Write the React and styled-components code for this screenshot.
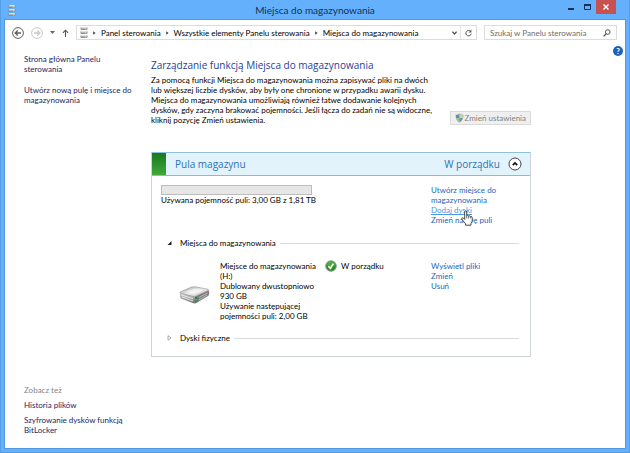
import React, { useState } from "react";
import styled, { createGlobalStyle } from "styled-components";

const App = () => {
  const [poolOpen, setPoolOpen] = useState(true);
  const [spacesOpen, setSpacesOpen] = useState(true);
  const [drivesOpen, setDrivesOpen] = useState(false);

  return (
    <>
      <GlobalStyle />
      <Window>
        <TitleBar>
          <TitleIcon>
            <DrivesIcon />
          </TitleIcon>
          <WindowTitle>Miejsca do magazynowania</WindowTitle>
          <WindowButtons>
            <WindowButton aria-label="Minimalizuj">
              <svg width="6" height="6" viewBox="0 0 6 6">
                <path d="M0 5h6" stroke="#17304f" strokeWidth="2" />
              </svg>
            </WindowButton>
            <WindowButton aria-label="Maksymalizuj">
              <svg width="7" height="6" viewBox="0 0 7 6">
                <path d="M0.5 1v4.5h6V1" fill="none" stroke="#17304f" />
                <path d="M0 1h7" stroke="#17304f" strokeWidth="2" />
              </svg>
            </WindowButton>
            <WindowButton $close aria-label="Zamknij">
              <svg width="6" height="6" viewBox="0 0 6 6">
                <path
                  d="M0.5 0.5l5 5M5.5 0.5l-5 5"
                  stroke="#fff"
                  strokeWidth="1.4"
                />
              </svg>
            </WindowButton>
          </WindowButtons>
        </TitleBar>

        <Client>
          <NavBar>
            <NavButton $width={12} aria-label="Wstecz">
              <ArrowCircle color="#5d5d5d" />
            </NavButton>
            <NavButton $width={12} aria-label="Dalej" disabled>
              <ArrowCircle color="#c9c9c9" flip />
            </NavButton>
            <NavButton $width={5} aria-label="Ostatnie lokalizacje">
              <svg width="5" height="3" viewBox="0 0 5 3">
                <path d="M0 0h5L2.5 3z" fill="#666" />
              </svg>
            </NavButton>
            <NavButton $width={7} aria-label="W górę">
              <svg width="7" height="8" viewBox="0 0 7 8">
                <path
                  d="M3.5 8V1.2M0.9 3.8L3.5 1.2L6.1 3.8"
                  fill="none"
                  stroke="#555"
                  strokeWidth="1.1"
                />
              </svg>
            </NavButton>

            <AddressBar>
              <DrivesIcon />
              <CrumbArrow />
              <Crumb href="#panel">Panel sterowania</Crumb>
              <CrumbArrow />
              <Crumb href="#elementy">Wszystkie elementy Panelu sterowania</Crumb>
              <CrumbArrow />
              <Crumb href="#miejsca">Miejsca do magazynowania</Crumb>
              <AddressTools>
                <NavButton $width={5} aria-label="Poprzednie lokalizacje">
                  <svg width="5" height="4" viewBox="0 0 5 4">
                    <path
                      d="M0.4 0.6L2.5 3L4.6 0.6"
                      fill="none"
                      stroke="#555"
                      strokeWidth="1.3"
                    />
                  </svg>
                </NavButton>
                <RefreshButton aria-label="Odśwież">
                  <svg width="7" height="8" viewBox="0 0 7 8">
                    <path
                      d="M5.4 2.2A2.7 2.7 0 1 0 6.2 4.6"
                      fill="none"
                      stroke="#555"
                      strokeWidth="1"
                    />
                    <path d="M6.4 0.6v2.8H3.6z" fill="#555" />
                  </svg>
                </RefreshButton>
              </AddressTools>
            </AddressBar>

            <SearchBox>
              <SearchInput
                type="text"
                aria-label="Szukaj w Panelu sterowania"
                placeholder="Szukaj w Panelu sterowania"
              />
              <svg width="8" height="8" viewBox="0 0 8 8">
                <circle
                  cx="4.8"
                  cy="3"
                  r="2.3"
                  fill="none"
                  stroke="#555"
                  strokeWidth="1"
                />
                <path d="M3.2 4.7L0.6 7.4" stroke="#555" strokeWidth="1.3" />
              </svg>
            </SearchBox>
          </NavBar>

          <Content>
            <Sidebar>
              <SideLink href="#start">Strona główna Panelu sterowania</SideLink>
              <SideLink href="#nowa-pula">
                Utwórz nową pulę i miejsce do magazynowania
              </SideLink>
              <SeeAlso>
                <SeeAlsoTitle>Zobacz też</SeeAlsoTitle>
                <SideLink href="#historia">Historia plików</SideLink>
                <SideLink href="#bitlocker">
                  Szyfrowanie dysków funkcją BitLocker
                </SideLink>
              </SeeAlso>
            </Sidebar>

            <Main>
              <PageTitle>Zarządzanie funkcją Miejsca do magazynowania</PageTitle>
              <Intro>
                <IntroText>
                  Za pomocą funkcji Miejsca do magazynowania można zapisywać
                  pliki na dwóch lub większej liczbie dysków, aby były one
                  chronione w przypadku awarii dysku. Miejsca do magazynowania
                  umożliwiają również łatwe dodawanie kolejnych dysków, gdy
                  zaczyna brakować pojemności. Jeśli łącza do zadań nie są
                  widoczne, kliknij pozycję Zmień ustawienia.
                </IntroText>
                <SettingsButton disabled>
                  <ShieldIcon />
                  Zmień ustawienia
                </SettingsButton>
              </Intro>

              <Pool>
                <PoolHeader>
                  <PoolStatusMark />
                  <PoolName>Pula magazynu</PoolName>
                  <PoolState>W porządku</PoolState>
                  <PoolToggle
                    aria-label="Zwiń pulę"
                    aria-expanded={poolOpen}
                    onClick={() => setPoolOpen(!poolOpen)}
                  >
                    <svg width="14" height="14" viewBox="0 0 14 14">
                      <circle
                        cx="7"
                        cy="7"
                        r="6"
                        fill="#fff"
                        stroke="#444"
                        strokeWidth="1"
                      />
                      <path
                        d={poolOpen ? "M4.8 8.2L7 6L9.2 8.2" : "M4.8 6L7 8.2L9.2 6"}
                        fill="none"
                        stroke="#111"
                        strokeWidth="1.7"
                      />
                    </svg>
                  </PoolToggle>
                </PoolHeader>

                {poolOpen && (
                  <PoolBody>
                    <PoolRow>
                      <div>
                        <UsageBar
                          role="progressbar"
                          aria-label="Używana pojemność puli"
                          aria-valuemin={0}
                          aria-valuemax={1853}
                          aria-valuenow={3}
                        />
                        <p>Używana pojemność puli: 3,00 GB z 1,81 TB</p>
                      </div>
                      <Actions>
                        <ActionLink href="#utworz">
                          Utwórz miejsce do magazynowania
                        </ActionLink>
                        <ActionLink href="#dodaj" $active>
                          Dodaj dyski
                          <HandPointer />
                        </ActionLink>
                        <ActionLink href="#nazwa">Zmień nazwę puli</ActionLink>
                      </Actions>
                    </PoolRow>

                    <SectionToggle
                      aria-expanded={spacesOpen}
                      onClick={() => setSpacesOpen(!spacesOpen)}
                    >
                      <Triangle open={spacesOpen} />
                      Miejsca do magazynowania
                    </SectionToggle>
                    {spacesOpen && (
                      <SpaceRow>
                        <DriveCell>
                          <DriveIcon />
                        </DriveCell>
                        <div>
                          <p>Miejsce do magazynowania (H:)</p>
                          <p>Dublowany dwustopniowo</p>
                          <p>930 GB</p>
                          <p>Używanie następującej pojemności puli: 2,00 GB</p>
                        </div>
                        <SpaceState>
                          <OkIcon />
                          W porządku
                        </SpaceState>
                        <Actions>
                          <ActionLink href="#pliki">Wyświetl pliki</ActionLink>
                          <ActionLink href="#zmien">Zmień</ActionLink>
                          <ActionLink href="#usun">Usuń</ActionLink>
                        </Actions>
                      </SpaceRow>
                    )}

                    <SectionToggle
                      aria-expanded={drivesOpen}
                      onClick={() => setDrivesOpen(!drivesOpen)}
                    >
                      <Triangle open={drivesOpen} />
                      Dyski fizyczne
                    </SectionToggle>
                  </PoolBody>
                )}
              </Pool>
            </Main>

            <HelpButton aria-label="Pomoc">?</HelpButton>
          </Content>
        </Client>
      </Window>
    </>
  );
};

export default App;

// Icons
const DrivesIcon = () => (
  <svg width="8" height="11" viewBox="0 0 8 11">
    {[0, 4, 8].map((y) => (
      <g key={y}>
        <rect x="0.5" y={y} width="7" height="3" rx="1" fill="#8c8c8c" />
        <rect x="1" y={y} width="6" height="1.4" rx="0.7" fill="#e2e2e2" />
        <rect x="5" y={y + 1.6} width="1.4" height="0.8" fill="#d8efc8" />
      </g>
    ))}
  </svg>
);

const ArrowCircle = ({ color, flip }) => (
  <svg width="12" height="12" viewBox="0 0 12 12">
    <circle cx="6" cy="6" r="5.4" fill="none" stroke={color} strokeWidth="1" />
    <path
      d={flip ? "M3 6h5.6M6.3 3.5L8.8 6L6.3 8.5" : "M9 6H3.4M5.7 3.5L3.2 6L5.7 8.5"}
      fill="none"
      stroke={color}
      strokeWidth="1.3"
    />
  </svg>
);

const CrumbArrow = () => (
  <svg width="3" height="4" viewBox="0 0 3 4">
    <path d="M0.2 0.2L2.6 2L0.2 3.8z" fill="#444" />
  </svg>
);

const ShieldIcon = () => (
  <svg width="9" height="10" viewBox="0 0 9 10">
    <path
      d="M4.5 0.3C5.8 1.2 7.2 1.5 8.6 1.5C8.8 5.4 7.4 8.4 4.5 9.8C1.6 8.4 0.2 5.4 0.4 1.5C1.8 1.5 3.2 1.2 4.5 0.3z"
      fill="#b5bcc0"
    />
    <path d="M4.5 1.2V5H1.2C1 4 1 3.2 1 2.2C2.3 2.2 3.4 1.9 4.5 1.2z" fill="#5f8fa8" />
    <path d="M4.5 1.2V5h3.3C8 4 8 3.2 8 2.2C6.7 2.2 5.6 1.9 4.5 1.2z" fill="#c3d49c" />
    <path d="M4.5 5V9C2.8 8.1 1.7 6.8 1.2 5z" fill="#a3c08a" />
    <path d="M4.5 5V9C6.2 8.1 7.3 6.8 7.8 5z" fill="#6c97ad" />
  </svg>
);

const Triangle = ({ open }) => (
  <svg width="5" height="6" viewBox="0 0 5 6">
    {open ? (
      <path d="M4.5 1v4H0.5z" fill="#222" />
    ) : (
      <path d="M1 0.7L4 3L1 5.3z" fill="#fff" stroke="#999" strokeWidth="0.8" />
    )}
  </svg>
);

const DriveIcon = () => (
  <svg width="31" height="18" viewBox="0 0 32 18">
    <defs>
      <linearGradient id="driveTop" x1="0" y1="0" x2="1" y2="1">
        <stop offset="0" stopColor="#a4a4a4" />
        <stop offset="0.5" stopColor="#ececec" />
        <stop offset="1" stopColor="#bcbcbc" />
      </linearGradient>
      <linearGradient id="driveFront" x1="0" y1="0" x2="0" y2="1">
        <stop offset="0" stopColor="#dedede" />
        <stop offset="1" stopColor="#6c6c6c" />
      </linearGradient>
    </defs>
    <path d="M1 6L17 10V17.5H15L2 12.6Q0.5 11.5 1 6z" fill="url(#driveFront)" />
    <path d="M17 10L31 4Q31.6 8.5 30 10L17.5 17.5H15.5z" fill="#7c7c7c" />
    <path
      d="M1 6L13 0.8Q15 0.3 17 0.6L30 3Q31 3.5 30 4.3L18 10Q16 10.8 14.5 10.5L1.5 7Q0.5 6.5 1 6z"
      fill="url(#driveTop)"
      stroke="#8e8e8e"
      strokeWidth="0.6"
    />
    <path d="M7 6L15 2.5L25 4L16 8.5z" fill="#fff" opacity="0.5" />
    <path d="M2.5 9L14.5 12.8M3 11L14.5 15.2" stroke="#f4f4f4" strokeWidth="0.9" />
    <path d="M20.5 11.5L29.5 7M20.5 14L29 9.2" stroke="#c9c9c9" strokeWidth="0.8" />
    <rect x="16.5" y="11" width="2.2" height="5" fill="#23813a" />
    <rect x="17" y="13" width="1.2" height="1.6" fill="#6fe07c" />
  </svg>
);

const OkIcon = () => (
  <svg width="12" height="12" viewBox="0 0 12 12">
    <circle cx="6" cy="6" r="5.3" fill="#2a8f27" stroke="#8a978a" strokeWidth="0.9" />
    <path d="M1.5 5.5a4.5 4.5 0 0 1 9 0Q6 7 1.5 5.5z" fill="#6cc45c" opacity="0.5" />
    <path d="M3.4 6.2L5.4 8.4L8.4 3.6" fill="none" stroke="#fff" strokeWidth="1.6" />
  </svg>
);

const HandPointer = () => (
  <Pointer width="12" height="16" viewBox="0 0 13 17">
    <path
      d="M4 10V2Q4 0.7 5.1 0.7Q6.2 0.7 6.2 2V6Q7.2 5 8.2 6.3Q9.3 5.5 10.1 6.9Q12.2 6.3 12.2 8.5V11Q12.2 13 10.8 14.5V16.3H5V14.8Q3 12.8 1 9.8Q0.5 8.6 1.5 8.3Q2.6 8 4 10z"
      fill="#fff"
      stroke="#222"
      strokeWidth="0.9"
    />
    <path d="M6.2 6V9M8.2 6.5V9M10.2 7V9" stroke="#222" strokeWidth="0.7" />
  </Pointer>
);

// Styled Components
const GlobalStyle = createGlobalStyle`
  * {
    box-sizing: border-box;
  }

  body {
    margin: 0;
    font-family: Lato, "Open Sans", sans-serif;
    font-size: 8px;
    line-height: 10px;
    color: #000;
  }

  h1, h2, p {
    margin: 0;
    font-weight: 400;
  }

  a {
    color: inherit;
    text-decoration: none;
  }

  button, input {
    margin: 0;
    padding: 0;
    border: none;
    background: none;
    font: inherit;
    color: inherit;
  }

  svg {
    display: block;
    flex-shrink: 0;
  }
`;

const Window = styled.div`
  display: flex;
  flex-direction: column;
  min-height: 100vh;
  padding: 0 4px 4px;
  background-color: #64b0fd;
  border: 1px solid #569fe6;
  border-top: none;
`;

const TitleBar = styled.header`
  display: grid;
  grid-template-columns: 1fr auto 1fr;
  align-items: center;
  height: 20px;
`;

const TitleIcon = styled.div`
  padding-left: 3px;
`;

const WindowTitle = styled.div`
  font-size: 10px;
  color: #14304f;
`;

const WindowButtons = styled.div`
  display: flex;
  align-self: start;
  justify-content: flex-end;
  padding-right: 9px;
`;

const WindowButton = styled.button`
  display: flex;
  align-items: center;
  justify-content: center;
  width: ${({ $close }) => ($close ? "20px" : "17px")};
  height: 14px;
  background-color: ${({ $close }) => ($close ? "#c75050" : "transparent")};
`;

const Client = styled.div`
  display: flex;
  flex: 1;
  flex-direction: column;
  background-color: #fff;
  outline: 1px solid #5499e0;
`;

const NavBar = styled.nav`
  display: flex;
  align-items: center;
  gap: 7px;
  padding: 5px 8px 0 7px;
`;

const NavButton = styled.button`
  display: flex;
  align-items: center;
  justify-content: center;
  width: ${({ $width }) => $width}px;
  height: 12px;
`;

const AddressBar = styled.div`
  display: flex;
  flex: 1;
  align-items: center;
  gap: 5px;
  height: 15px;
  padding-left: 3px;
  border: 1px solid #dcdcdc;
`;

const Crumb = styled.a`
  white-space: nowrap;
`;

const AddressTools = styled.div`
  display: flex;
  align-items: center;
  align-self: stretch;
  gap: 3px;
  margin-left: auto;
`;

const RefreshButton = styled.button`
  display: flex;
  align-items: center;
  align-self: stretch;
  justify-content: center;
  width: 16px;
  border-left: 1px solid #e4e4e4;
`;

const SearchBox = styled.div`
  display: flex;
  align-items: center;
  width: 133px;
  height: 15px;
  padding: 0 5px;
  border: 1px solid #dcdcdc;
`;

const SearchInput = styled.input`
  flex: 1;
  min-width: 0;
  height: 13px;
  outline: none;

  &::placeholder {
    color: #6d6d6d;
    opacity: 1;
  }
`;

const Content = styled.div`
  display: flex;
  flex: 1;
`;

const Sidebar = styled.aside`
  display: flex;
  flex-direction: column;
  gap: 11px;
  width: 146px;
  padding: 14px 16px 13px 19px;
`;

const SideLink = styled.a`
  color: #1e1e5e;
`;

const SeeAlso = styled.div`
  display: flex;
  flex-direction: column;
  gap: 5px;
  margin-top: auto;
`;

const SeeAlsoTitle = styled.p`
  color: #848484;
`;

const Main = styled.main`
  flex: 1;
  padding-top: 18px;
`;

const PageTitle = styled.h1`
  font-family: "Open Sans", sans-serif;
  font-size: 10px;
  line-height: 14px;
  color: #1f3f96;
`;

const Intro = styled.div`
  display: flex;
  align-items: flex-end;
  justify-content: space-between;
  margin: 3px 0 27px;
`;

const IntroText = styled.p`
  width: 282px;
`;

const SettingsButton = styled.button`
  display: flex;
  align-items: center;
  gap: 1px;
  height: 14px;
  padding: 0 4px;
  border: 1px solid #d9d9d9;
  background-color: #efefef;
  color: #838383;
  white-space: nowrap;
`;

const Pool = styled.section`
  border: 1px solid #cfd4d8;
  border-top-color: #8fc0d8;
`;

const PoolHeader = styled.div`
  display: flex;
  align-items: center;
  height: 23px;
  padding-right: 8px;
  border-bottom: 1px solid #8fb8d8;
  background-color: #e3f3fb;
  color: #2774ba;
  font-family: "Open Sans", sans-serif;
  font-size: 10px;
`;

const PoolStatusMark = styled.div`
  align-self: stretch;
  width: 14px;
  margin-right: 9px;
  background: linear-gradient(#17791c, #40a83c);
`;

const PoolName = styled.h2`
  flex: 1;
  font-size: 10px;
`;

const PoolState = styled.span`
  margin-right: 8px;
`;

const PoolToggle = styled.button`
  width: 14px;
  height: 14px;
`;

const PoolBody = styled.div`
  padding: 9px 0 13px 9px;
`;

const PoolRow = styled.div`
  display: grid;
  grid-template-columns: 1fr 99px;
  margin-bottom: 13px;
`;

const UsageBar = styled.div`
  width: 151px;
  height: 10px;
  border: 1px solid #bcbcbc;
  background-color: #e6e6e6;
`;

const Actions = styled.div`
  display: flex;
  flex-direction: column;
  align-items: flex-start;
  padding-right: 24px;
`;

const ActionLink = styled.a`
  position: relative;
  color: ${({ $active }) => ($active ? "#4a9ae0" : "#1b66bd")};
  text-decoration: ${({ $active }) => ($active ? "underline" : "none")};
`;

const Pointer = styled.svg`
  position: absolute;
  top: 5px;
  left: 30px;
  z-index: 1;
`;

const SectionToggle = styled.button`
  display: flex;
  align-items: center;
  gap: 8px;
  width: 100%;
  padding: 0 11px 0 6px;

  &::after {
    content: "";
    flex: 1;
    height: 1px;
    margin-left: -4px;
    background-color: #dcdcdc;
  }
`;

const SpaceRow = styled.div`
  display: grid;
  grid-template-columns: 41px 105px 1fr 99px;
  padding: 13px 0 12px 18px;
`;

const DriveCell = styled.div`
  align-self: center;
  padding-top: 8px;
`;

const SpaceState = styled.div`
  display: flex;
  align-items: center;
  align-self: start;
  gap: 4px;
  height: 10px;
`;

const HelpButton = styled.button`
  width: 10px;
  height: 10px;
  margin: 6px 2px 0 82px;
  border-radius: 50%;
  background-color: #1c62b8;
  color: #fff;
  font-weight: 700;
  line-height: 10px;
`;
